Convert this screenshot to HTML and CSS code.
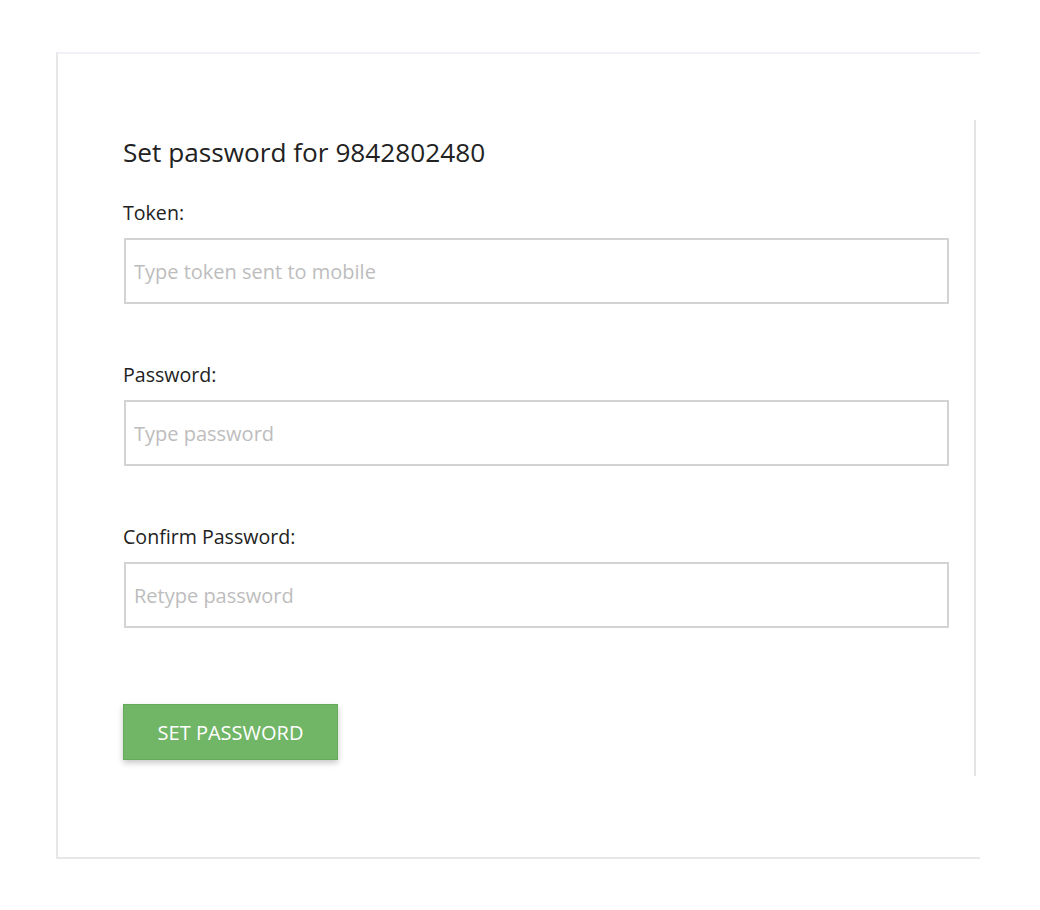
FILE: index.html
```html
<!DOCTYPE html>
<html lang="en">
<head>
<meta charset="utf-8">
<title>Set password</title>
<link rel="stylesheet" href="styles.css">
</head>
<body>
<div class="card">
  <form class="panel">
    <h1 class="title">Set password for 9842802480</h1>
    <div class="field">
      <label class="label" for="token">Token:</label>
      <input class="input" id="token" type="text" placeholder="Type token sent to mobile">
    </div>
    <div class="field">
      <label class="label" for="pw">Password:</label>
      <input class="input" id="pw" type="password" placeholder="Type password">
    </div>
    <div class="field">
      <label class="label" for="pw2">Confirm Password:</label>
      <input class="input" id="pw2" type="password" placeholder="Retype password">
    </div>
    <button class="btn" type="button">SET PASSWORD</button>
  </form>
</div>
</body>
</html>
```

FILE: styles.css
```css
* { box-sizing: border-box; }
html, body { margin: 0; padding: 0; background: #ffffff; }
body {
  padding: 52px 0 0 56px;
  font-family: "Open Sans", "DejaVu Sans", sans-serif;
  color: #222222;
}
.card {
  width: 924px;
  height: 807px;
  border-top: 2px solid #eff1f6;
  border-left: 2px solid #e7e7e7;
  border-bottom: 2px solid #e7e7e7;
  padding: 66px 4px 0 65px;
}
.panel {
  display: flex;
  flex-direction: column;
  align-items: flex-start;
  width: 853px;
  height: 656px;
  border-right: 2px solid #e4e4e4;
  padding-top: 14px;
}
.title {
  margin: 0;
  font-size: 26.2px;
  font-weight: 400;
  line-height: 36px;
  color: #222222;
}
.field {
  display: flex;
  flex-direction: column;
  align-items: flex-start;
  width: 100%;
}
.field + .field { margin-top: 59px; }
.title + .field { margin-top: 31px; }
.label {
  font-size: 19.6px;
  line-height: 24px;
  margin-bottom: 13px;
  color: #222222;
}
.input {
  width: 825px;
  height: 66px;
  margin: 0 0 0 1px;
  border: 2px solid #d3d3d3;
  border-radius: 0;
  padding: 0 8px;
  font-family: inherit;
  font-size: 20px;
  color: #333333;
  background: #ffffff;
  outline: none;
}
.input::placeholder { color: #bdbdbd; }
.btn {
  margin-top: 76px;
  width: 215px;
  height: 56px;
  border: 1px solid #66ab5c;
  background: #71b567;
  color: #ffffff;
  font-family: inherit;
  font-size: 20px;
  padding: 0;
  box-shadow: 0 3px 6px rgba(0, 0, 0, 0.22);
  cursor: pointer;
}
```
